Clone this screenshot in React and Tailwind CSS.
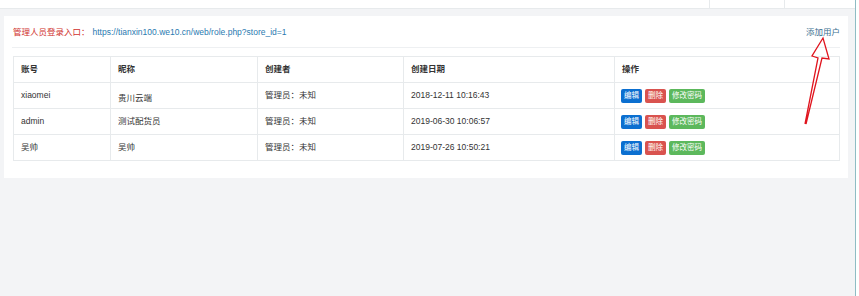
const users = [
  { account: "xiaomei", nick: "贵川云端", creator: "管理员：未知", date: "2018-12-11 10:16:43", low: true },
  { account: "admin", nick: "测试配货员", creator: "管理员：未知", date: "2019-06-30 10:06:57" },
  { account: "吴帅", nick: "吴帅", creator: "管理员：未知", date: "2019-07-26 10:50:21" },
];

const font = "font-['Liberation_Sans','Noto_Sans_CJK_SC',sans-serif]";

const App = () => {
  return (
    <div className={`relative flex w-full h-[296px] bg-[#f3f4f6] text-[8.5px] text-[#333] ${font}`}>
      <div className="flex-1 flex flex-col">
        <div className="flex h-[9px] bg-white border-b border-[#e7eaec]">
          <div className="w-[710px] border-r border-[#e7eaec]"></div>
          <div className="w-[75px] border-r border-[#e7eaec]"></div>
          <div className="flex-1"></div>
        </div>

        <div className="ml-[4px] mt-[7px] w-[844px] bg-white pb-[17px]">
          <div className="flex items-center justify-between h-[32px] mx-[8px] border-b border-[#eef0f2] pl-[1px]">
            <div className="flex items-center pt-[1px]">
              <span className="text-[#d0312d]">管理人员登录入口：</span>
              <span className="text-[#2a7ab0] ml-[3px]">https://tianxin100.we10.cn/web/role.php?store_id=1</span>
            </div>
            <span className="text-[#3b6f8f] pt-[1px]">添加用户</span>
          </div>

          <table className="mt-[8px] ml-[9px] w-[827px] border-collapse border border-[#e7eaec]">
            <thead>
              <tr className="h-[26px]">
                <th className="w-[97px] text-left font-bold px-[7px] border border-[#e7eaec]">账号</th>
                <th className="w-[147px] text-left font-bold px-[7px] border border-[#e7eaec]">昵称</th>
                <th className="w-[146px] text-left font-bold px-[7px] border border-[#e7eaec]">创建者</th>
                <th className="w-[211px] text-left font-bold px-[7px] border border-[#e7eaec]">创建日期</th>
                <th className="text-left font-bold px-[7px] border border-[#e7eaec]">操作</th>
              </tr>
            </thead>
            <tbody>
              {users.map((u) => (
                <tr key={u.account} className="h-[26px]">
                  <td className="px-[7px] border border-[#e7eaec]">{u.account}</td>
                  <td className={`px-[7px] border border-[#e7eaec] ${u.low ? "pt-[6px]" : ""}`}>{u.nick}</td>
                  <td className="px-[7px] border border-[#e7eaec]">{u.creator}</td>
                  <td className="px-[7px] border border-[#e7eaec]">{u.date}</td>
                  <td className="px-[6px] border border-[#e7eaec]">
                    <div className="flex gap-[3px] text-[7.5px] text-white leading-none">
                      <span className="bg-[#0b6fd0] rounded-[2px] px-[3px] h-[14px] flex items-center">编辑</span>
                      <span className="bg-[#d9534f] rounded-[2px] px-[3px] h-[14px] flex items-center">删除</span>
                      <span className="bg-[#5cb85c] rounded-[2px] px-[3px] h-[14px] flex items-center">修改密码</span>
                    </div>
                  </td>
                </tr>
              ))}
            </tbody>
          </table>
        </div>
      </div>
      <div className="w-[1px] bg-[#8fbcc4]"></div>
      <div className="w-[3px] bg-white"></div>

      <svg className="absolute left-0 top-0 pointer-events-none" width="859" height="296">
        <g fill="none" stroke="#e0141e" strokeWidth="1.3" strokeLinejoin="miter">
          <path d="M805 124 L818 58 L812 56 L823 38 L829 59 L822 58 L806 124" />
        </g>
      </svg>
    </div>
  );
};

export default App;
